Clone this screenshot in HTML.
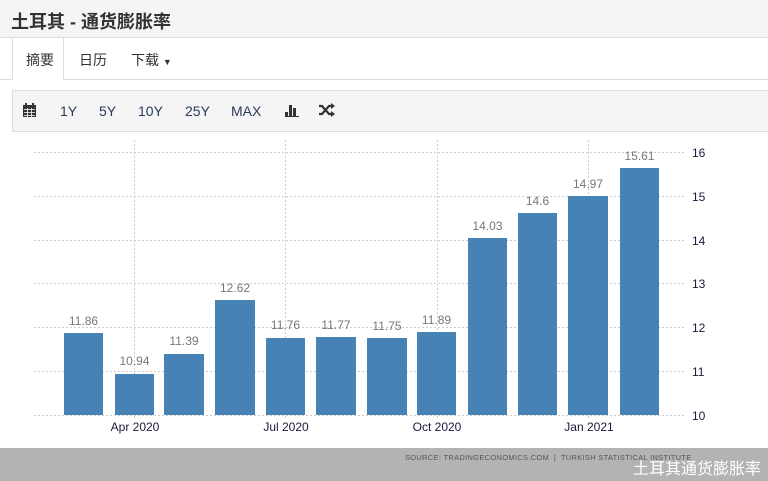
<!DOCTYPE html>
<html><head><meta charset="utf-8"><style>
*{margin:0;padding:0;box-sizing:border-box}
body{width:768px;height:481px;overflow:hidden;background:#fff;font-family:"Liberation Sans","Noto Sans CJK SC",sans-serif;position:relative}
.hdr{position:absolute;left:0;top:0;width:768px;height:38px;background:#f5f5f5;border-bottom:1px solid #ddd}
.hdr h1{position:absolute;left:11px;top:8px;font-size:18px;font-weight:bold;color:#333}
.tabs{position:absolute;left:0;top:38px;width:768px;height:42px;border-bottom:1px solid #ddd}
.tab{position:absolute;top:12px;font-size:14px;color:#333}
.act{position:absolute;left:12px;top:0;width:52px;height:42px;background:#fff;border-left:1px solid #ddd;border-right:1px solid #ddd;border-bottom:1px solid #fff}
.tb{position:absolute;left:12px;top:90px;width:756px;height:42px;background:#f5f5f5;border:1px solid #ddd;border-right:none}
.tb span{position:absolute;top:12px;font-size:14px;color:#2a3b5a}
.chart{position:absolute;left:12px;top:131px;width:754px;height:330px;border-left:1px solid #eee;border-right:1px solid #eee}
.foot{position:absolute;left:0;top:448px;width:768px;height:33px;background:#b3b3b3}
.src{position:absolute;left:405px;top:5px;font-size:7.5px;color:#555;letter-spacing:.3px}
.wm{position:absolute;left:633px;top:7px;font-size:16px;color:#fff}
</style></head><body>
<div class="hdr"><h1>土耳其 - 通货膨胀率</h1></div>
<div class="tabs"><div class="act"></div>
<span class="tab" style="left:26px">摘要</span><span class="tab" style="left:79px">日历</span><span class="tab" style="left:131px">下载 <span style="font-size:9px">▼</span></span></div>
<div class="tb">
<svg style="position:absolute;left:10px;top:12px" width="13" height="14" viewBox="0 0 13 14"><rect x="0" y="2" width="13" height="12" fill="#333"/><rect x="2" y="0" width="2" height="3" fill="#333"/><rect x="9" y="0" width="2" height="3" fill="#333"/><g fill="#f5f5f5"><rect x="1" y="6" width="11" height="0.8"/><rect x="1" y="9" width="11" height="0.8"/><rect x="1" y="12" width="11" height="0.8"/><rect x="4" y="5" width="0.8" height="9"/><rect x="8" y="5" width="0.8" height="9"/></g></svg>
<span style="left:47px">1Y</span><span style="left:86px">5Y</span><span style="left:125px">10Y</span><span style="left:172px">25Y</span><span style="left:218px">MAX</span>
<svg style="position:absolute;left:272px;top:12px" width="14" height="14"><rect x="0" y="9" width="3" height="5" fill="#333"/><rect x="4" y="2" width="3" height="12" fill="#333"/><rect x="8" y="5" width="3" height="9" fill="#333"/><rect x="0" y="13" width="14" height="1" fill="#333"/></svg>
<svg style="position:absolute;left:306px;top:12px" width="16" height="14" viewBox="0 0 16 14"><path d="M0 3h3l7 8h3M0 11h3l7-8h3" stroke="#333" stroke-width="2.2" fill="none"/><path d="M12 0l4 3-4 3zM12 8l4 3-4 3z" fill="#333"/></svg>
</div>
<svg style="position:absolute;left:0;top:0" width="768" height="481">
<g stroke="#ccc" stroke-dasharray="2,2" stroke-width="1">
<line x1="34" y1="152.5" x2="686" y2="152.5"/><line x1="34" y1="196.5" x2="686" y2="196.5"/><line x1="34" y1="240.5" x2="686" y2="240.5"/><line x1="34" y1="283.5" x2="686" y2="283.5"/><line x1="34" y1="327.5" x2="686" y2="327.5"/><line x1="34" y1="371.5" x2="686" y2="371.5"/><line x1="34" y1="415.5" x2="686" y2="415.5"/>
<line x1="134.5" y1="140" x2="134.5" y2="420"/><line x1="285.5" y1="140" x2="285.5" y2="420"/><line x1="437.5" y1="140" x2="437.5" y2="420"/><line x1="588.5" y1="140" x2="588.5" y2="420"/>
</g>
<g fill="#4682b4">
<rect x="64" y="333" width="39" height="82"/><rect x="115" y="374" width="39" height="41"/><rect x="164" y="354" width="40" height="61"/><rect x="215" y="300" width="40" height="115"/><rect x="266" y="338" width="39" height="77"/><rect x="316" y="337" width="40" height="78"/><rect x="367" y="338" width="40" height="77"/><rect x="417" y="332" width="39" height="83"/><rect x="468" y="238" width="39" height="177"/><rect x="518" y="213" width="39" height="202"/><rect x="568" y="196" width="40" height="219"/><rect x="620" y="168" width="39" height="247"/>
</g>
<g font-family="Liberation Sans" font-size="12" fill="#777" text-anchor="middle">
<text x="83.5" y="325">11.86</text><text x="134.5" y="365">10.94</text><text x="184" y="345">11.39</text><text x="235" y="292">12.62</text><text x="285.5" y="329">11.76</text><text x="336" y="329">11.77</text><text x="387" y="330">11.75</text><text x="436.5" y="324">11.89</text><text x="487.5" y="230">14.03</text><text x="537.5" y="205">14.6</text><text x="588" y="188">14.97</text><text x="639.5" y="160">15.61</text>
</g>
<g font-family="Liberation Sans" font-size="12" fill="#1a1a3a">
<text x="692" y="157">16</text><text x="692" y="201">15</text><text x="692" y="245">14</text><text x="692" y="288">13</text><text x="692" y="332">12</text><text x="692" y="376">11</text><text x="692" y="420">10</text>
<g text-anchor="middle"><text x="135" y="431">Apr 2020</text><text x="286" y="431">Jul 2020</text><text x="437" y="431">Oct 2020</text><text x="589" y="431">Jan 2021</text></g>
</g>
</svg>
<div class="foot"><span class="src">SOURCE: TRADINGECONOMICS.COM &nbsp;| &nbsp;TURKISH STATISTICAL INSTITUTE</span><span class="wm">土耳其通货膨胀率</span></div>
</body></html>
